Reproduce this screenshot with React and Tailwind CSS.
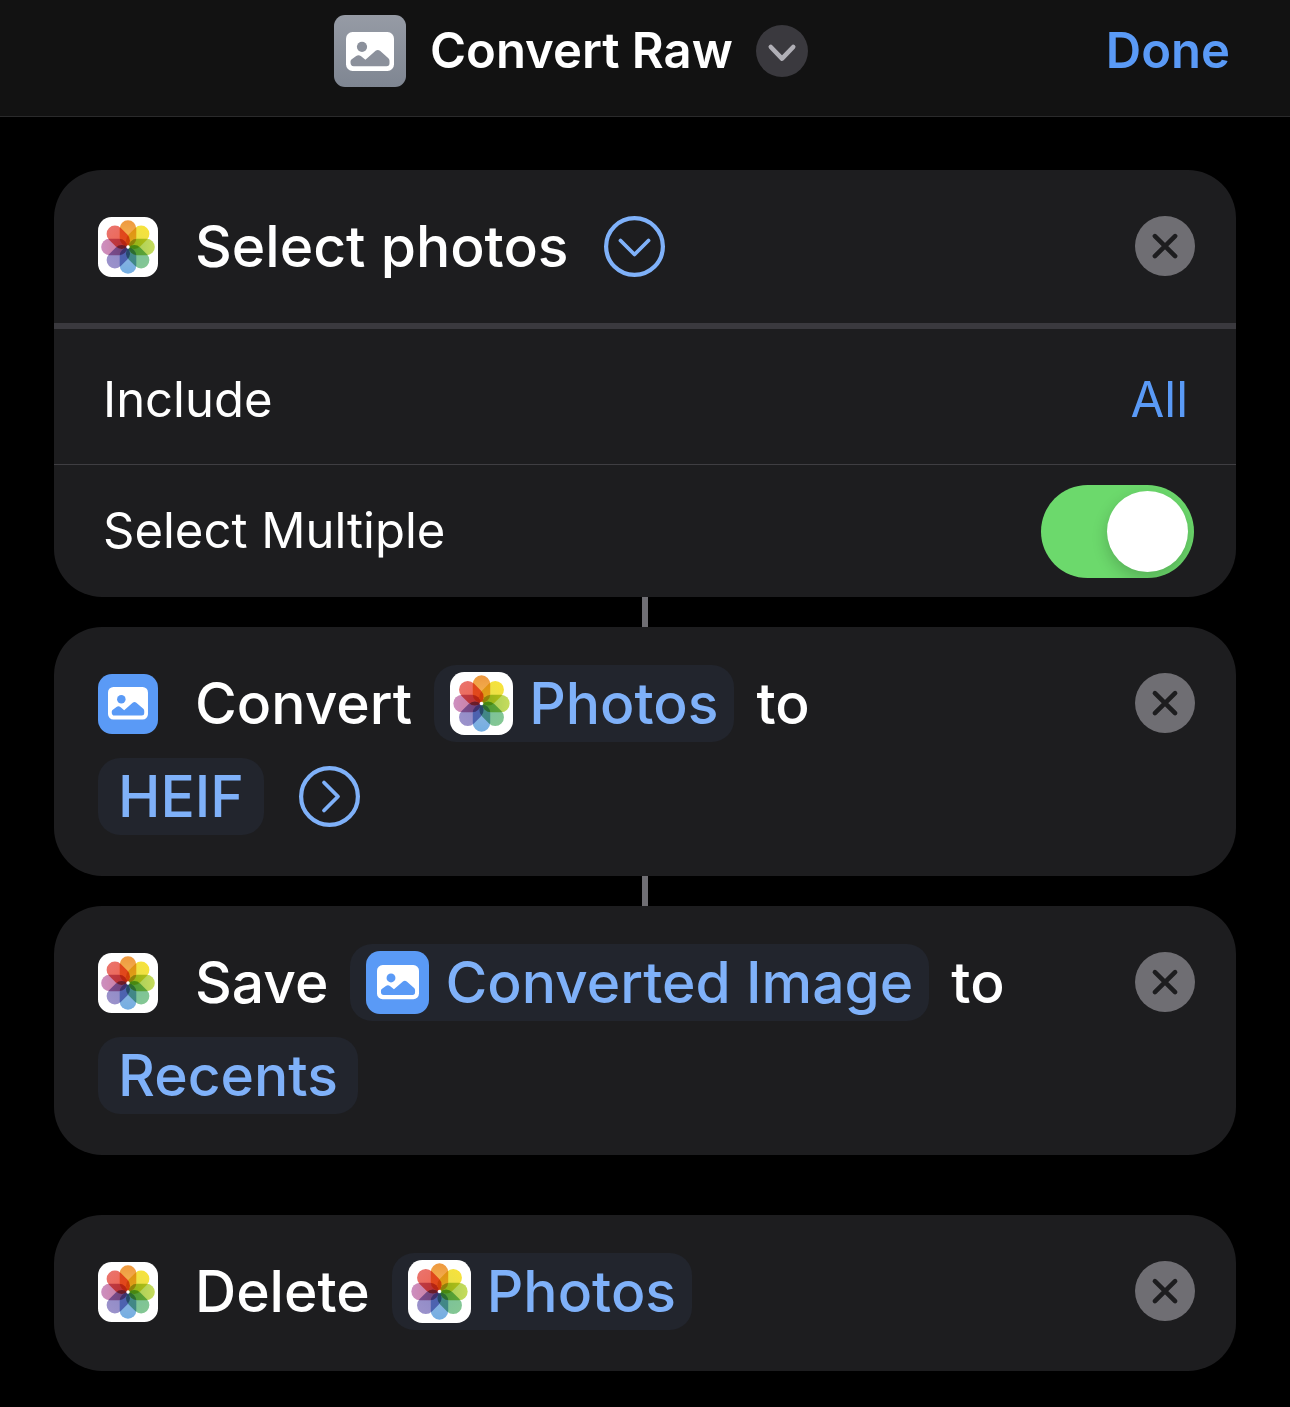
import { useId, useState } from 'react';

// Each petal: outer colour, inner colour, rotation in degrees
const PETALS = [
  ['#ee983f', '#f4b653', 0],
  ['#f7e23c', '#e6e04a', 45],
  ['#c6dc5c', '#a5cc58', 90],
  ['#84c793', '#7ac09b', 135],
  ['#74aee2', '#8cb4e0', 180],
  ['#9b92cb', '#8f8ac6', 225],
  ['#cd8fc0', '#cb7ea0', 270],
  ['#ea736c', '#ee6552', 315],
];

function PhotosIcon({ className }) {
  const id = useId();
  return (
    <svg viewBox="0 0 60 60" className={`shrink-0 isolate ${className}`} aria-hidden="true">
      <defs>
        {PETALS.map(([outer, inner, angle]) => (
          <linearGradient key={angle} id={`${id}-${angle}`} x1="0" y1="0" x2="0" y2="1">
            <stop offset="0" stopColor={outer} />
            <stop offset="0.8" stopColor={inner} />
          </linearGradient>
        ))}
      </defs>
      <rect width="60" height="60" rx="13.5" fill="#fff" />
      {PETALS.map(([, , angle]) => (
        <rect
          key={angle}
          x="21.7"
          y="3.2"
          width="16.6"
          height="26.2"
          rx="8.3"
          fill={`url(#${id}-${angle})`}
          transform={`rotate(${angle} 30 30)`}
          className="mix-blend-multiply"
        />
      ))}
      <circle cx="30" cy="30" r="1.7" fill="#fff" />
    </svg>
  );
}

function PictureGlyph({ className, hole }) {
  return (
    <svg viewBox="0 0 48 39" className={className} aria-hidden="true">
      <rect width="48" height="39" rx="6.5" fill="#fff" />
      <circle cx="16" cy="14.8" r="5.1" fill={hole} />
      <path
        d="M4.5 30.5V29.6Q4.5 28.4 5.4 27.5L10.2 23.9Q12.5 22.4 14.8 23.9L19.4 27.8L29.6 18.8Q31.8 17.2 34 18.8L42.4 26.2Q43.5 27.3 43.5 28.8V31.2Q43.5 34.2 40.5 34.2H7.8Q4.5 34.2 4.5 30.5Z"
        fill={hole}
      />
    </svg>
  );
}

function ImageIcon({ className }) {
  return (
    <span className={`flex shrink-0 items-center justify-center rounded-[14px] bg-[#5a9af6] ${className}`}>
      <PictureGlyph className="w-2/3" hole="#5a9af6" />
    </span>
  );
}

function CloseButton({ label }) {
  return (
    <button type="button" aria-label={label} className="mt-2 size-[60px] shrink-0 rounded-full bg-[#6f6e73]">
      <svg viewBox="0 0 60 60" className="size-full" aria-hidden="true">
        <path d="M19.9 20.1L40.1 40.1M40.1 20.1L19.9 40.1" stroke="#1d1d1f" strokeWidth="4.6" strokeLinecap="round" />
      </svg>
    </button>
  );
}

function CircleButton({ label, path }) {
  return (
    <button type="button" aria-label={label} className="ml-[35px] size-[61px] shrink-0">
      <svg viewBox="0 0 61 61" className="size-full" fill="none" stroke="#7fb1f9" strokeLinecap="round" strokeLinejoin="round" aria-hidden="true">
        <circle cx="30.5" cy="30.5" r="28.4" strokeWidth="4.2" />
        <path d={path} strokeWidth="3.8" />
      </svg>
    </button>
  );
}

function Pill({ icon, children }) {
  return (
    <button
      type="button"
      className={`flex h-[77px] items-center gap-4 rounded-[22px] bg-[#22252d] text-[#7fb1f9] ${icon ? 'px-4' : 'px-5'}`}
    >
      {icon}
      <span>{children}</span>
    </button>
  );
}

function Action({ name, children }) {
  return (
    <div className="flex items-start justify-between pt-[38px] pr-[41px] pb-[41px] pl-11 text-[57px] leading-[77px] font-medium">
      <div className="flex flex-col gap-4">{children}</div>
      <CloseButton label={`Remove ${name}`} />
    </div>
  );
}

function Line({ icon, children }) {
  return (
    <div className="flex min-h-[77px] items-center gap-[22px]">
      {icon && <span className="mr-[15px] flex">{icon}</span>}
      {children}
    </div>
  );
}

function Card({ children }) {
  return <section className="overflow-hidden rounded-[48px] bg-[#1d1d1f]">{children}</section>;
}

function Connector() {
  return <div className="mx-auto h-[30px] w-[6px] bg-[#6f6e73]" />;
}

export default function App() {
  const [multiple, setMultiple] = useState(true);
  return (
    <div className="min-h-screen bg-black font-['Inter',sans-serif] text-white">
      <header className="flex items-center border-b border-[#2a2a2b] bg-[#121212] pt-[15px] pr-[60px] pb-[29px] pl-9">
        <div className="flex flex-1 items-center justify-center">
          <span className="flex size-[72px] items-center justify-center rounded-[11px] bg-linear-to-b from-[#969ba5] to-[#7f8692]">
            <PictureGlyph className="w-12" hole="#8b909b" />
          </span>
          <h1 className="ml-6 text-[49px] leading-[60px] font-semibold">Convert Raw</h1>
          <button type="button" aria-label="Shortcut options" className="ml-[23px] size-[52px] rounded-full bg-[#3a393e]">
            <svg viewBox="0 0 52 52" className="size-full" fill="none" aria-hidden="true">
              <path d="M14.8 22L26 33.6L37.2 22" stroke="#b0afb6" strokeWidth="4.6" strokeLinecap="round" strokeLinejoin="round" />
            </svg>
          </button>
        </div>
        <button type="button" className="text-[49px] leading-[60px] font-semibold text-[#5a9af6]">Done</button>
      </header>

      <main className="px-[54px] pt-[53px] pb-9">
        <Card>
          <div className="-mb-[3px]">
            <Action name="Select photos">
              <Line icon={<PhotosIcon className="size-[60px]" />}>
                <div className="flex items-center">
                  <span>Select photos</span>
                  <CircleButton label="Hide options" path="M16.5 24.5L30.5 38.5L44.5 24.5" />
                </div>
              </Line>
            </Action>
          </div>
          <div className="flex h-[141px] items-center justify-between border-t-[6px] border-[#3a393e] pt-[6px] pr-12 pl-[49px] text-[49px]">
            <label htmlFor="include">Include</label>
            <select id="include" className="appearance-none bg-transparent text-right text-[#5a9af6] [field-sizing:content]">
              <option>All</option>
            </select>
          </div>
          <div className="flex h-[133px] items-center justify-between border-t border-[#3f3e42] pr-[42px] pl-[49px] text-[49px]">
            <label htmlFor="multiple">Select Multiple</label>
            <input
              id="multiple"
              type="checkbox"
              role="switch"
              checked={multiple}
              onChange={(e) => setMultiple(e.target.checked)}
              className="flex h-[93px] w-[153px] appearance-none items-center overflow-hidden rounded-full bg-[#39393d] px-[6px] before:size-[81px] before:rounded-full before:bg-white before:shadow-[0_6px_16px_rgba(0,0,0,0.2)] before:content-[''] checked:justify-end checked:bg-[#6cd96c]"
            />
          </div>
        </Card>
        <Connector />
        <Card>
          <Action name="Convert">
            <Line icon={<ImageIcon className="size-[60px]" />}>
              <span>Convert</span>
              <Pill icon={<PhotosIcon className="size-[63px]" />}>Photos</Pill>
              <span>to</span>
            </Line>
            <Line>
              <div className="flex items-center">
                <Pill>HEIF</Pill>
                <CircleButton label="Show options" path="M25 16.5L39 30.5L25 44.5" />
              </div>
            </Line>
          </Action>
        </Card>
        <Connector />
        <Card>
          <Action name="Save">
            <Line icon={<PhotosIcon className="size-[60px]" />}>
              <span>Save</span>
              <Pill icon={<ImageIcon className="size-[63px]" />}>Converted Image</Pill>
              <span>to</span>
            </Line>
            <Line>
              <Pill>Recents</Pill>
            </Line>
          </Action>
        </Card>
        <div className="mt-[60px]">
          <Card>
            <Action name="Delete">
              <Line icon={<PhotosIcon className="size-[60px]" />}>
                <span>Delete</span>
                <Pill icon={<PhotosIcon className="size-[63px]" />}>Photos</Pill>
              </Line>
            </Action>
          </Card>
        </div>
      </main>
    </div>
  );
}
